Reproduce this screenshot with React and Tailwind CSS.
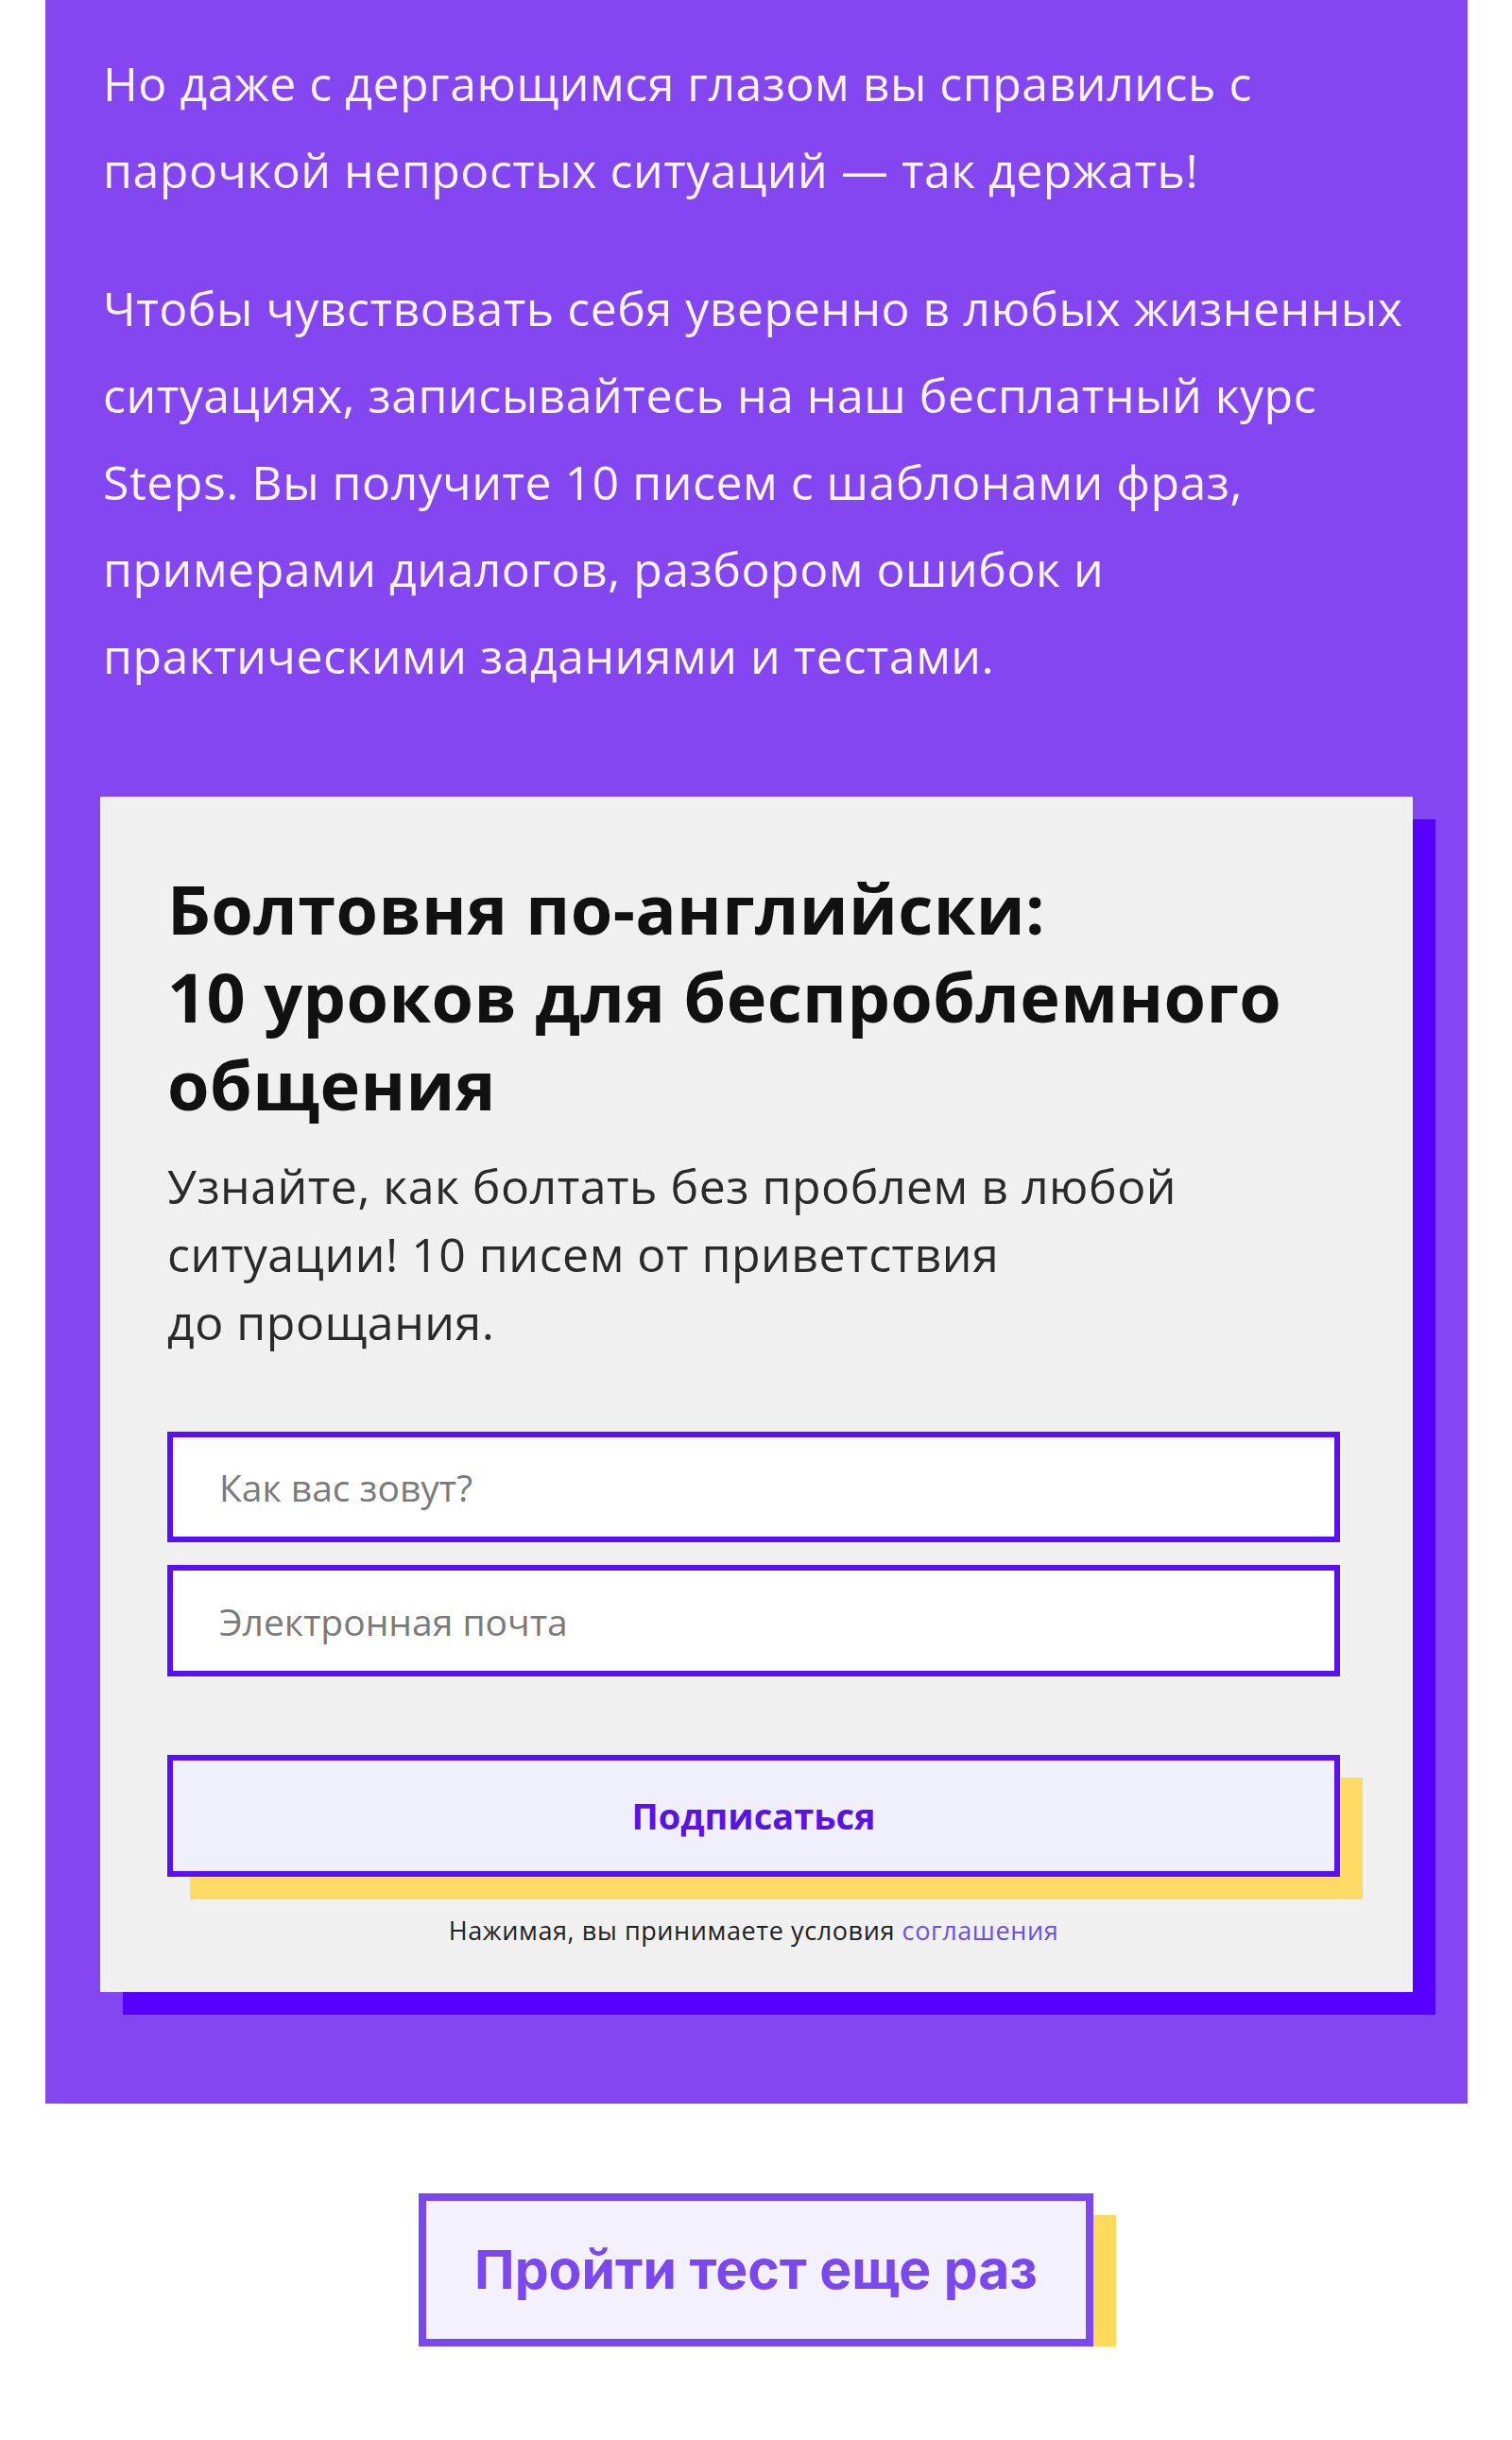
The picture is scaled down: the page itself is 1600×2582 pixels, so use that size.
import React from "react";

const bodyFont = { fontFamily: '"Open Sans", "Noto Sans", sans-serif' };
const geoFont = { fontFamily: 'Inter, "Noto Sans", sans-serif' };

const App = () => {
  return (
    <div className="w-[1600px] min-h-[2582px] bg-white pb-[98px]" style={bodyFont}>
      <section className="ml-[48px] w-[1505px] bg-[#8346f1] px-[58px] pt-[42px] pb-[118px]">
        <p className="pl-[3px] text-[50px] leading-[92px] tracking-[0.5px] text-[#f7f3ff]">
          Но даже с дергающимся глазом вы справились с парочкой непростых ситуаций — так держать!
        </p>
        <p className="mt-[54px] pl-[3px] text-[50px] leading-[92px] tracking-[0.5px] text-[#f7f3ff]">
          Чтобы чувствовать себя уверенно в любых жизненных ситуациях, записывайтесь на наш бесплатный курс
          Steps. Вы получите 10 писем с шаблонами фраз, примерами диалогов, разбором ошибок и практическими
          заданиями и тестами.
        </p>

        <div className="mt-[103px] bg-[#f0f0f0] pt-[72px] pl-[71px] pr-[77px] pb-[50px] shadow-[24px_24px_0_#5600ff]">
          <h2 className="text-[72px] font-bold leading-[93px] tracking-[0.4px] text-[#111]">
            Болтовня по-английски:
            <br />
            10 уроков для беспроблемного общения
          </h2>
          <p className="mt-[25px] text-[50px] leading-[72px] tracking-[0.5px] text-[#2a2a2a]">
            Узнайте, как болтать без проблем в любой
            <br />
            ситуации! 10 писем от приветствия
            <br />
            до прощания.
          </p>

          <div className="mt-[80px] flex flex-col gap-[24px]">
            <input
              type="text"
              placeholder="Как вас зовут?"
              className="h-[117px] w-full border-[6px] border-[#5a10f5] bg-white pl-[49px] text-[39px] text-[#333] outline-none placeholder:text-[#7a7a7a]"
              style={bodyFont}
            />
            <input
              type="email"
              placeholder="Электронная почта"
              className="h-[118px] w-full border-[6px] border-[#5a10f5] bg-white pl-[49px] text-[39px] text-[#333] outline-none placeholder:text-[#7a7a7a]"
              style={bodyFont}
            />
          </div>

          <button
            className="mt-[83px] flex h-[129px] w-full items-center justify-center border-[6px] border-[#5a10f5] bg-[#f0f0fd] text-[38px] font-bold text-[#5b12e8] shadow-[24px_24px_0_#ffdb66]"
            style={bodyFont}
          >
            Подписаться
          </button>

          <p className="mt-[42px] text-center text-[27px] leading-[30px] tracking-[0.6px] text-[#222]">
            Нажимая, вы принимаете условия <span className="text-[#6d4ee6]">соглашения</span>
          </p>
        </div>
      </section>

      <div className="relative mx-auto mt-[95px] w-[714px]">
        <button
          className="flex h-[162px] w-full items-center justify-center border-[8px] border-[#7b47ef] bg-[#f2f1fd] text-[57px] font-bold text-[#7b47ef]"
          style={geoFont}
        >
          Пройти тест еще раз
        </button>
        <div className="absolute left-full top-[23px] bottom-0 w-[24px] bg-[#ffd95c]" />
      </div>
    </div>
  );
};

export default App;
